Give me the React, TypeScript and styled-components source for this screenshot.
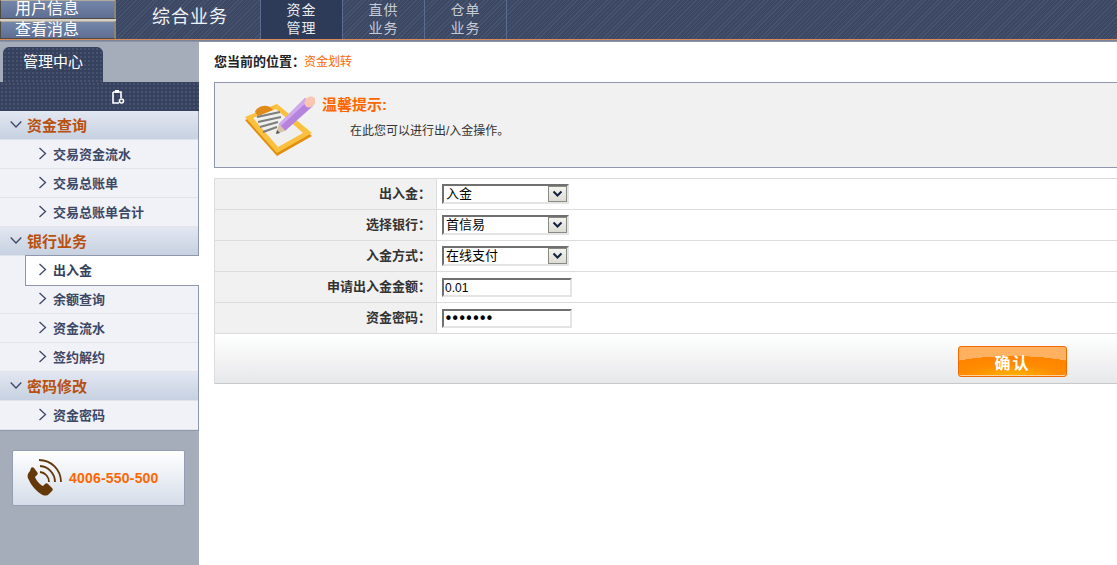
import React from "react";
import styled, {createGlobalStyle} from "styled-components";

const GlobalStyle = createGlobalStyle`
  html, body {
    margin: 0;
    padding: 0;
    background: #fff;
    overflow: hidden;
  }
  body {
    font-family: "Liberation Sans", "Noto Sans CJK SC", sans-serif;
    font-size: 12px;
    color: #222;
  }
`

const Page = styled.div`
  width: 1117px;
  height: 565px;
  display: flex;
  flex-direction: column;
  overflow: hidden;
`

const TopBar = styled.div`
  height: 39px;
  flex: none;
  display: flex;
  background: repeating-linear-gradient(135deg, #47546f 0, #47546f 1px, #3b4763 1px, #3b4763 3px);
  border-bottom: 1px solid #d98a58;
  box-shadow: 0 1px 0 #7c8597, 0 2px 0 #8b93a5;
`

const UserButtons = styled.div`
  width: 116px;
  flex: none;
  display: flex;
  flex-direction: column;
  gap: 2px;
  background: #d5cfc4;
`

const UserButton = styled.div`
  flex: 1;
  display: flex;
  align-items: center;
  justify-content: center;
  padding-right: 21px;
  background: linear-gradient(#7486aa, #5d6e92);
  border: 1px solid #4e4a44;
  border-top-color: #b5ab9c;
  border-right: 2px solid #8b8478;
  color: #fff;
  font-size: 16px;
  line-height: 16px;
`

const Title = styled.div`
  width: 144px;
  flex: none;
  box-sizing: border-box;
  padding-left: 36px;
  font-size: 18px;
  line-height: 34px;
  color: #eef1f6;
  letter-spacing: 1px;
`

const NavTab = styled.div<{ $active?: boolean }>`
  width: 81px;
  flex: none;
  border-left: 1px solid #5a6c92;
  background: ${({$active}) => $active ? '#2e3b58' : 'transparent'};
  color: ${({$active}) => $active ? '#e8ebf0' : '#c6cbd5'};
  font-size: 14px;
  line-height: 18px;
  text-align: center;
  padding-top: 1px;
  letter-spacing: 1px;
  &:last-child {
    border-right: 1px solid #5a6c92;
  }
`

const Body = styled.div`
  flex: 1;
  margin-top: 2px;
  display: flex;
  min-height: 0;
`

const Sidebar = styled.div`
  width: 199px;
  flex: none;
  background: #a6adba;
  padding-top: 5px;
  box-sizing: border-box;
`

const dots = `
  background-color: #35415d;
  background-image: radial-gradient(#465270 1px, transparent 1.2px);
  background-size: 4px 4px;
`

const SideTab = styled.div`
  ${dots};
  width: 100px;
  height: 35px;
  margin-left: 3px;
  border-radius: 6px 6px 0 0;
  color: #fff;
  font-size: 15px;
  line-height: 29px;
  text-align: center;
`

const SideBand = styled.div`
  ${dots};
  height: 29px;
  display: flex;
  align-items: center;
  justify-content: center;
  padding-left: 36px;
`

const Menu = styled.div`
  background: #f1f2f7;
  border-right: 1px solid #8f97ad;
  border-bottom: 1px solid #8f97ad;
  margin-bottom: -1px;
`

const GroupHead = styled.div`
  height: 29px;
  box-sizing: border-box;
  display: flex;
  align-items: center;
  gap: 5px;
  padding: 0 0 2px 10px;
  background: linear-gradient(#e2e7f1, #c7d1e1);
  border-bottom: 1px solid #dfe3ea;
  color: #b8500f;
  font-size: 15px;
  font-weight: bold;
`

const MenuItem = styled.div<{ $active?: boolean }>`
  height: 29px;
  box-sizing: border-box;
  display: flex;
  align-items: center;
  gap: 6px;
  padding: 0 0 2px 38px;
  color: #3c4866;
  font-size: 13px;
  font-weight: bold;
  background: #f1f2f7;
  border-bottom: 1px solid #e2e4ea;
  ${({$active}) => $active && `
    position: relative;
    margin: -1px -1px -1px 25px;
    height: 31px;
    padding-left: 12px;
    background: #fff;
    color: #333f5c;
    border: 1px solid #8f97ad;
    border-right: 0;
    z-index: 1;
  `}
`

const PhoneCard = styled.div`
  width: 173px;
  height: 56px;
  box-sizing: border-box;
  margin: 20px 0 0 12px;
  display: flex;
  align-items: center;
  gap: 6px;
  padding-left: 12px;
  background: linear-gradient(#fff, #d5dde9);
  border: 1px solid #969eb4;
  border-radius: 2px;
  color: #ff6600;
  font-size: 14px;
  font-weight: bold;
  letter-spacing: 0.2px;
`

const Main = styled.div`
  flex: 1;
  min-width: 0;
  padding: 12px 0 0 15px;
`

const Crumb = styled.div`
  height: 16px;
  line-height: 16px;
  font-size: 13px;
  font-weight: bold;
  color: #222;
`

const CrumbLink = styled.span`
  margin-left: -1px;
  color: #ff6600;
  font-size: 12px;
  font-weight: normal;
`

const Notice = styled.div`
  height: 86px;
  margin-top: 12px;
  box-sizing: border-box;
  display: flex;
  background: #f1f1f1;
  border: 1px solid #8f97ad;
  border-right: 0;
  padding: 12px 0 0 30px;
`

const NoticeText = styled.div`
  padding-left: 7px;
`

const NoticeTitle = styled.div`
  color: #ff6600;
  font-size: 15px;
  font-weight: bold;
  line-height: 20px;
`

const NoticeBody = styled.div`
  margin: 7px 0 0 28px;
  font-size: 12px;
  line-height: 18px;
  color: #333;
`

const Form = styled.div`
  margin-top: 10px;
  border-left: 1px solid #dcdcdc;
  border-top: 1px solid #dcdcdc;
`

const Row = styled.div`
  height: 31px;
  box-sizing: border-box;
  display: flex;
  border-bottom: 1px solid #dcdcdc;
`

const RowLabel = styled.div`
  width: 222px;
  flex: none;
  box-sizing: border-box;
  padding-right: 5px;
  background: #f1f1f1;
  border-right: 1px solid #dcdcdc;
  text-align: right;
  font-size: 13px;
  font-weight: bold;
  line-height: 29px;
  color: #333;
`

const RowField = styled.div`
  flex: 1;
  display: flex;
  align-items: center;
  padding-left: 5px;
`

const fieldBorder = `
  box-sizing: border-box;
  border: 2px solid #e4e4e4;
  border-top-color: #707070;
  border-left-color: #707070;
  background: #fff;
  color: #000;
`

const SelectBox = styled.div`
  ${fieldBorder};
  width: 127px;
  height: 20px;
  display: flex;
  justify-content: space-between;
  font-size: 13px;
  line-height: 15px;
  padding-left: 2px;
`

const SelectArrow = styled.div`
  width: 19px;
  flex: none;
  display: flex;
  align-items: center;
  justify-content: center;
  background: linear-gradient(#f4f4f0, #dcdcd4);
  border: 1px solid #8a8a84;
  box-sizing: border-box;
`

const TextInput = styled.input`
  ${fieldBorder};
  width: 130px;
  height: 19px;
  padding: 0 0 0 1px;
  margin: 1px 0 0;
  font-family: "Liberation Sans", sans-serif;
  font-size: 12px;
  outline: none;

  &[type="password"] {
    font-family: "DejaVu Sans", sans-serif;
    font-size: 15px;
    letter-spacing: -2px;
    padding-left: 0;
  }
`

const Footer = styled.div`
  height: 50px;
  box-sizing: border-box;
  display: flex;
  justify-content: flex-end;
  padding: 12px 50px 0 0;
  background: linear-gradient(#fff, #e7e8ea);
  border-bottom: 1px solid #c8c8c8;
`

const ConfirmButton = styled.button`
  width: 109px;
  height: 31px;
  box-sizing: border-box;
  padding: 0;
  border: 1px solid #f06a00;
  border-radius: 3px;
  background-color: #ffb162;
  background-image: radial-gradient(ellipse 85px 20px at 50% 100%, #ffb400 0, #ff8c00 55%, #ff8400 99%, #ffb162 100%);
  box-shadow: inset 0 -1px 0 #ffd39a;
  color: #fff;
  font-family: "Liberation Sans", "Noto Sans CJK SC", sans-serif;
  font-size: 16px;
  font-weight: bold;
  letter-spacing: 2px;
`

const menuGroups = [
    {title: "资金查询", items: ["交易资金流水", "交易总账单", "交易总账单合计"]},
    {title: "银行业务", items: ["出入金", "余额查询", "资金流水", "签约解约"]},
    {title: "密码修改", items: ["资金密码"]},
];

const formRows = [
    {label: "出入金：", value: "入金"},
    {label: "选择银行：", value: "首信易"},
    {label: "入金方式：", value: "在线支付"},
];

const ChevronRight = () => (
    <svg width="9" height="13" viewBox="0 0 9 13">
        <path d="M1.5 1l6 5.5-6 5.5" fill="none" stroke="#3c4866" strokeWidth="1.3"/>
    </svg>
);

const ChevronDown = () => (
    <svg width="12" height="9" viewBox="0 0 12 9">
        <path d="M.7 1.5L6 7l5.3-5.5" fill="none" stroke="#3c4866" strokeWidth="1.3"/>
    </svg>
);

const ClipIcon = () => (
    <svg width="14" height="16" viewBox="0 0 14 16">
        <path d="M2 3h8v6M2 3v11h6" fill="none" stroke="#fff" strokeWidth="1.6"/>
        <rect x="4" y="1" width="4" height="3" fill="#fff"/>
        <circle cx="10.5" cy="12" r="2" fill="none" stroke="#fff" strokeWidth="1.6"/>
    </svg>
);

const PhoneIcon = () => (
    <svg width="38" height="38" viewBox="0 0 38 38">
        <path
            d="M5 12c-3 3-3 6-1 9 2 5 7 11 12 14 3 2 6 2 8 0l3-3c1-1 1-2 0-3l-4-4c-1-1-2-1-3 0l-2 2c-3-1-7-6-8-9l2-2c1-1 1-2 0-3l-3-4c-1-1-2-1-3 0z"
            fill="#653809"/>
        <g fill="none" stroke="#653809" strokeWidth="1.8">
            <path d="M15 13A10 10 0 0 1 24 23"/>
            <path d="M15 7A16 16 0 0 1 30 23"/>
            <path d="M14 1A22 22 0 0 1 36 23"/>
        </g>
    </svg>
);

const NoteIcon = () => (
    <svg width="70" height="62" viewBox="0 0 70 62">
        <path d="M0 25L32 12l35 29-35 20z" fill="#e08f0e"/>
        <path d="M0 22L32 9l35 29-35 20z" fill="#fbc13e"/>
        <path d="M8 23L31 14l27 24-25 14z" fill="#efefed"/>
        <path d="M10 17c1-5 11-9 16-4l2 2-15 6z" fill="#e08a1a"/>
        <g stroke="#7d7d7d" strokeWidth="2">
            <path d="M12 22l23-5"/>
            <path d="M13 27l23-5"/>
            <path d="M15 32l18-5"/>
            <path d="M18 37l14-5"/>
        </g>
        <path d="M34 29L60 3l8 8-28 25z" fill="#b583dc"/>
        <path d="M34 29L60 3l3 3-27 25z" fill="#d0a8ee"/>
        <path d="M34 29l6 7-9 3z" fill="#d9c3a8"/>
        <path d="M32 35l-1 4 4-1z" fill="#555"/>
        <ellipse cx="65" cy="7" rx="5" ry="6" fill="#f8c6b0" transform="rotate(45 65 7)"/>
    </svg>
);

const App: React.FC = () => {
    return (
        <Page>
            <GlobalStyle/>
            <TopBar>
                <UserButtons>
                    <UserButton>用户信息</UserButton>
                    <UserButton>查看消息</UserButton>
                </UserButtons>
                <Title>综合业务</Title>
                <NavTab $active>资金<br/>管理</NavTab>
                <NavTab>直供<br/>业务</NavTab>
                <NavTab>仓单<br/>业务</NavTab>
            </TopBar>
            <Body>
                <Sidebar>
                    <SideTab>管理中心</SideTab>
                    <SideBand><ClipIcon/></SideBand>
                    <Menu>
                        {menuGroups.map((group) => (
                            <React.Fragment key={group.title}>
                                <GroupHead><ChevronDown/>{group.title}</GroupHead>
                                {group.items.map((item) => (
                                    <MenuItem key={item} $active={item === "出入金"}>
                                        <ChevronRight/>{item}
                                    </MenuItem>
                                ))}
                            </React.Fragment>
                        ))}
                    </Menu>
                    <PhoneCard><PhoneIcon/>4006-550-500</PhoneCard>
                </Sidebar>
                <Main>
                    <Crumb>您当前的位置：<CrumbLink>资金划转</CrumbLink></Crumb>
                    <Notice>
                        <NoteIcon/>
                        <NoticeText>
                            <NoticeTitle>温馨提示:</NoticeTitle>
                            <NoticeBody>在此您可以进行出/入金操作。</NoticeBody>
                        </NoticeText>
                    </Notice>
                    <Form>
                        {formRows.map((row) => (
                            <Row key={row.label}>
                                <RowLabel>{row.label}</RowLabel>
                                <RowField>
                                    <SelectBox>
                                        {row.value}
                                        <SelectArrow>
                                            <svg width="11" height="8" viewBox="0 0 11 8">
                                                <path d="M1.5 1.5l4 4 4-4" fill="none" stroke="#14213f" strokeWidth="2"/>
                                            </svg>
                                        </SelectArrow>
                                    </SelectBox>
                                </RowField>
                            </Row>
                        ))}
                        <Row>
                            <RowLabel>申请出入金金额：</RowLabel>
                            <RowField><TextInput defaultValue="0.01"/></RowField>
                        </Row>
                        <Row>
                            <RowLabel>资金密码：</RowLabel>
                            <RowField><TextInput type="password" defaultValue="1234567"/></RowField>
                        </Row>
                        <Footer><ConfirmButton>确认</ConfirmButton></Footer>
                    </Form>
                </Main>
            </Body>
        </Page>
    )
}

export default App;
